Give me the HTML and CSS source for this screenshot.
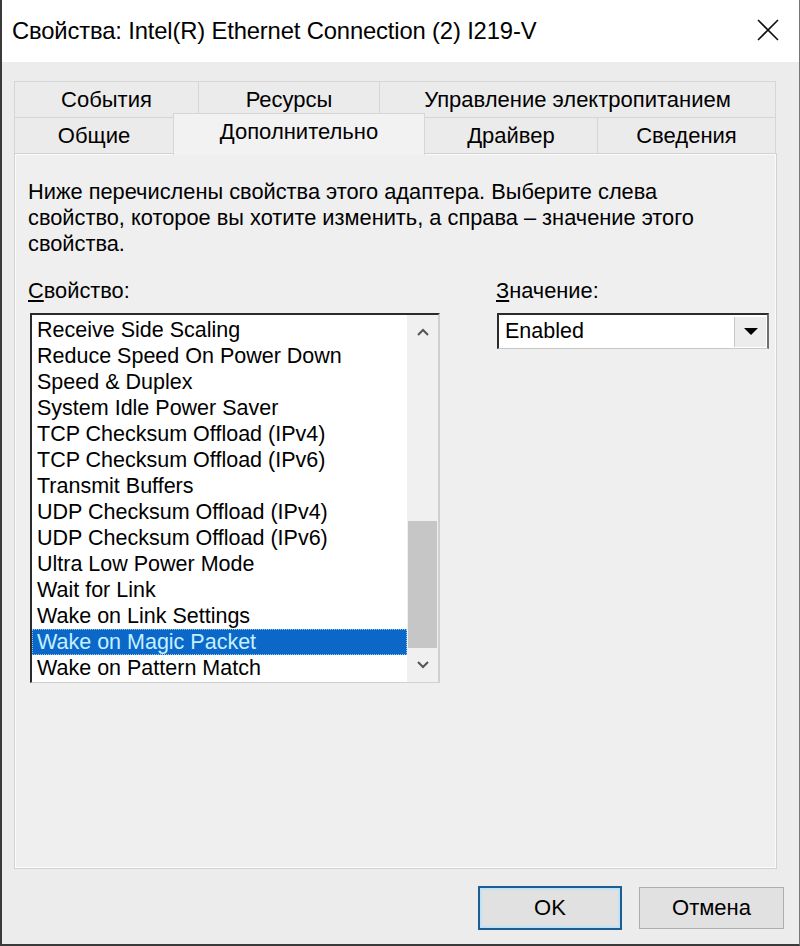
FILE: index.html
```html
<!DOCTYPE html>
<html lang="ru">
<head>
<meta charset="utf-8">
<title>Свойства</title>
<link rel="stylesheet" href="styles.css">
</head>
<body>
<div class="window">
  <div class="titlebar">
    <span class="title">Свойства: Intel(R) Ethernet Connection (2) I219-V</span>
    <svg class="close" viewBox="0 0 22 22" width="22" height="22"><path d="M1 1 L21 21 M21 1 L1 21" stroke="#111" stroke-width="1.6" fill="none"/></svg>
  </div>
  <div class="content">
    <div class="tabs">
      <div class="tab-row">
        <div class="tab w-events">События</div>
        <div class="tab w-res">Ресурсы</div>
        <div class="tab w-power last">Управление электропитанием</div>
      </div>
      <div class="tab-row">
        <div class="tab w-general">Общие</div>
        <div class="tab w-adv selected">Дополнительно</div>
        <div class="tab w-driver">Драйвер</div>
        <div class="tab w-info last">Сведения</div>
      </div>
    </div>
    <div class="panel">
      <p class="desc">Ниже перечислены свойства этого адаптера. Выберите слева свойство, которое вы хотите изменить, а справа – значение этого свойства.</p>
      <div class="cols">
        <div class="col-left">
          <div class="label"><u>С</u>войство:</div>
          <div class="listbox">
            <ul class="items">
              <li>Receive Side Scaling</li>
              <li>Reduce Speed On Power Down</li>
              <li>Speed &amp; Duplex</li>
              <li>System Idle Power Saver</li>
              <li>TCP Checksum Offload (IPv4)</li>
              <li>TCP Checksum Offload (IPv6)</li>
              <li>Transmit Buffers</li>
              <li>UDP Checksum Offload (IPv4)</li>
              <li>UDP Checksum Offload (IPv6)</li>
              <li>Ultra Low Power Mode</li>
              <li>Wait for Link</li>
              <li>Wake on Link Settings</li>
              <li class="sel">Wake on Magic Packet</li>
              <li>Wake on Pattern Match</li>
            </ul>
            <div class="scrollbar">
              <div class="sb-btn sb-up"><svg viewBox="0 0 14 10" width="14" height="10"><path d="M2 8 L7 3 L12 8" stroke="#555" stroke-width="2" fill="none"/></svg></div>
              <div class="sb-track"><div class="sb-thumb"></div></div>
              <div class="sb-btn sb-down"><svg viewBox="0 0 14 10" width="14" height="10"><path d="M2 2 L7 7 L12 2" stroke="#555" stroke-width="2" fill="none"/></svg></div>
            </div>
          </div>
        </div>
        <div class="col-right">
          <div class="label"><u>З</u>начение:</div>
          <div class="select">
            <span class="select-value">Enabled</span>
            <span class="select-btn"><svg viewBox="0 0 14 8" width="14" height="8"><path d="M0 0 L14 0 L7 7 Z" fill="#000"/></svg></span>
          </div>
        </div>
      </div>
    </div>
  </div>
  <div class="buttons">
    <div class="btn btn-ok">OK</div>
    <div class="btn btn-cancel">Отмена</div>
  </div>
</div>
</body>
</html>
```
FILE: styles.css
```css
* { box-sizing: border-box; }
html, body { margin: 0; padding: 0; }
body {
  width: 800px;
  height: 946px;
  overflow: hidden;
  background: #ececec;
  font-family: "Liberation Sans", Arial, sans-serif;
  color: #000;
}
.window {
  width: 800px;
  height: 946px;
  background: #ececec;
  border-left: 2px solid #3a3a3a;
  border-right: 1px solid #777;
  border-bottom: 2px solid #3a3a3a;
  display: flex;
  flex-direction: column;
}
.titlebar {
  height: 62px;
  background: #fff;
  display: flex;
  align-items: center;
  justify-content: space-between;
  padding: 0 20px 0 10px;
}
.title { font-size: 23.8px; letter-spacing: -0.15px; }
.close { display: block; margin-top: -2px; }

.content {
  padding: 19px 22px 0 12px;
  display: flex;
  flex-direction: column;
}
.tabs { display: flex; flex-direction: column; }
.tab-row { display: flex; height: 36px; }
.tab {
  height: 36px;
  border-top: 1px solid #d6d6d6;
  border-left: 1px solid #d6d6d6;
  background: #ebebeb;
  font-size: 22px;
  display: flex;
  align-items: center;
  justify-content: center;
  white-space: nowrap;
}
.tab.last { border-right: 1px solid #d6d6d6; }
.w-events { width: 184px; }
.w-res { width: 181px; }
.w-power { width: 397px; }
.w-general { width: 159px; }
.w-adv { width: 252px; }
.w-driver { width: 172px; }
.w-info { width: 179px; }
.tab.selected {
  position: relative;
  z-index: 2;
  height: 42px;
  margin-top: -4px;
  background: #f2f2f2;
  border-right: 1px solid #d6d6d6;
  padding-bottom: 6px;
}
.tab.selected + .tab { border-left: none; }

.panel {
  height: 716px;
  border: 1px solid #d2d2d2;
  background: #efefef;
  box-shadow: inset 1px 1px 0 #fbfbfb, inset -1px -1px 0 #fbfbfb;
  padding: 25px 7px 0 13px;
}
.desc {
  margin: 0;
  max-width: 700px;
  font-size: 21.8px;
  line-height: 26px;
}
.cols {
  display: flex;
  justify-content: space-between;
  margin-top: 21px;
}
.col-left { width: 412px; }
.col-right { width: 273px; }
.label {
  font-size: 21.8px;
  line-height: 26px;
  margin-bottom: 9px;
}
.listbox {
  margin-left: 2px;
  width: 410px;
  height: 370px;
  background: #fff;
  border-top: 2px solid #2b2b2b;
  border-left: 2px solid #2b2b2b;
  border-right: 2px solid #d0d0d0;
  border-bottom: 1px solid #d0d0d0;
  display: flex;
}
.items {
  flex: 1;
  list-style: none;
  margin: 0;
  padding: 2px 0 0 0;
}
.items li {
  height: 26px;
  line-height: 26px;
  padding-left: 5px;
  font-size: 21.5px;
  white-space: nowrap;
}
.items li.sel {
  background: #0b68c9;
  color: #c6f0ff;
  outline: 1px dotted #8fc9ec;
  outline-offset: -1px;
}
.scrollbar {
  width: 31px;
  background: #f0f0f0;
  display: flex;
  flex-direction: column;
}
.sb-btn {
  display: flex;
  align-items: center;
  justify-content: center;
}
.sb-up { height: 33px; }
.sb-down { height: 34px; }
.sb-track {
  flex: 1;
  display: flex;
  flex-direction: column;
  justify-content: flex-end;
}
.sb-thumb {
  height: 127px;
  margin: 0 1px;
  background: #c6c6c6;
}
.select {
  margin-left: 1px;
  width: 272px;
  height: 36px;
  background: #fff;
  border-top: 2px solid #2b2b2b;
  border-left: 2px solid #2b2b2b;
  border-right: 2px solid #6f6f6f;
  border-bottom: 1px solid #c8c8c8;
  display: flex;
  align-items: center;
  justify-content: space-between;
  padding: 0 1px 0 6px;
}
.select-value { font-size: 21.5px; }
.select-btn {
  width: 32px;
  height: 30px;
  background: #ececec;
  border-left: 1px solid #c8c8c8;
  display: flex;
  align-items: center;
  justify-content: center;
}

.buttons {
  display: flex;
  justify-content: flex-end;
  gap: 17px;
  margin-top: 17px;
  padding-right: 15px;
}
.btn {
  height: 43px;
  background: #e1e1e1;
  border: 1px solid #adadad;
  font-size: 22px;
  display: flex;
  align-items: center;
  justify-content: center;
}
.btn-ok {
  width: 144px;
  height: 44px;
  border: 2px solid #1d5d8f;
  box-shadow: inset 0 0 0 2px #bfe3f6;
}
.btn-cancel { width: 145px; margin-top: 1px; height: 42px; }
```
